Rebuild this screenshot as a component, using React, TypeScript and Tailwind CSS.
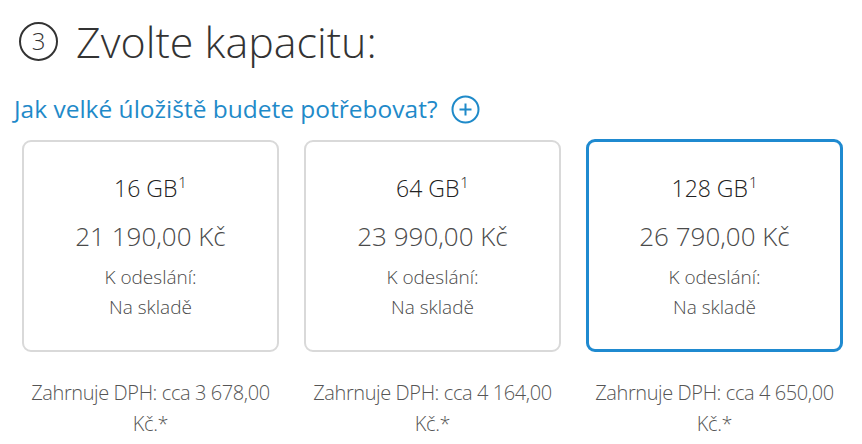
const options = [
  { size: "16 GB", price: "21 190,00 Kč", vat: "3 678,00", selected: false },
  { size: "64 GB", price: "23 990,00 Kč", vat: "4 164,00", selected: false },
  { size: "128 GB", price: "26 790,00 Kč", vat: "4 650,00", selected: true },
]

export default function App() {
  return (
    <div className="w-[862px] h-[444px] bg-white overflow-hidden font-['Open_Sans',sans-serif] text-[#333]">
      {/* Step header */}
      <div className="flex items-center pt-[20px] pl-[19px] h-[62px]">
        <div className="w-[39px] h-[39px] rounded-full border-[2px] border-[#333] flex items-center justify-center text-[24px] font-light leading-none">
          3
        </div>
        <h1 className="ml-[18px] text-[43px] font-light leading-none">Zvolte kapacitu:</h1>
      </div>

      <div className="flex items-center mt-[32px] pl-[14px] h-[30px] text-[#1f8ac9]">
        <span className="text-[24.5px] leading-none">Jak velké úložiště budete potřebovat?</span>
        <svg className="ml-[13px]" width="29" height="29" viewBox="0 0 29 29" fill="none">
          <circle cx="14.5" cy="14.5" r="13" stroke="#1f8ac9" strokeWidth="2" />
          <path d="M14.5 8.5v12M8.5 14.5h12" stroke="#1f8ac9" strokeWidth="2" />
        </svg>
      </div>

      <div className="grid grid-cols-3 gap-[25px] pl-[22px] pr-[19px] mt-[16px]">
        {options.map((o) => (
          <div key={o.size} className="flex flex-col items-center">
            <div
              className={
                o.selected
                  ? "w-full h-[213px] -mt-[1px] rounded-[9px] border-[3px] border-[#1f8ad0] flex flex-col items-center pt-[31px]"
                  : "w-full h-[212px] rounded-[9px] border-[2px] border-[#d9d9d9] flex flex-col items-center pt-[31px]"
              }
            >
              <div className="text-[23px] font-light leading-[30px] text-[#222]">
                {o.size}
                <span className="text-[15px] relative -top-[9px] ml-[1px]">1</span>
              </div>
              <div className="mt-[15px] text-[26px] font-light leading-[30px] text-[#4a4a4a]">{o.price}</div>
              <div className="mt-[11px] text-[19px] font-light leading-[30px] text-[#4a4a4a] text-center">
                K odeslání:
                <br />
                Na skladě
              </div>
            </div>
            <div className="mt-[25px] text-[20px] font-light leading-[31px] text-[#555] text-center tracking-[-0.4px]">
              Zahrnuje DPH: cca {o.vat}
              <br />
              Kč.*
            </div>
          </div>
        ))}
      </div>
    </div>
  )
}
